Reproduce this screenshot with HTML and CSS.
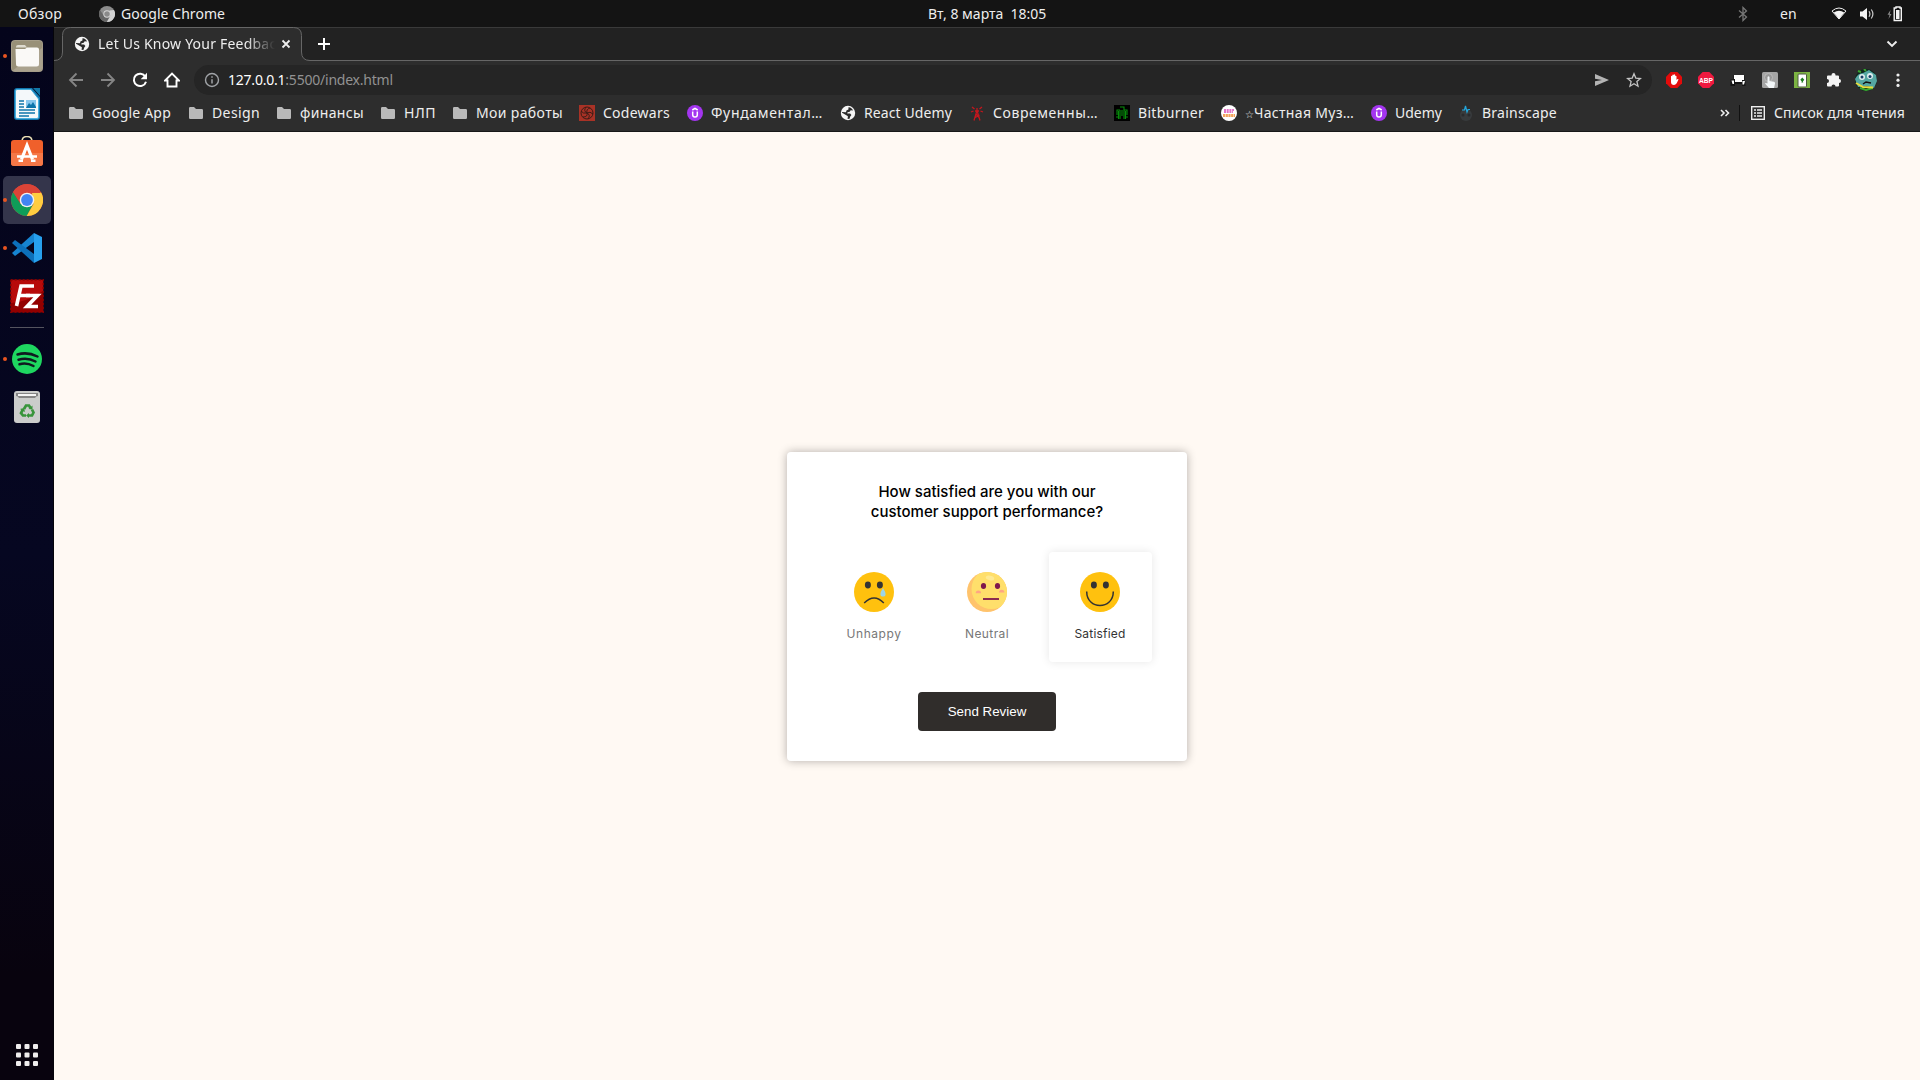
FILE: index.html
```html
<!DOCTYPE html>
<html lang="ru">
<head>
<meta charset="utf-8">
<title>Let Us Know Your Feedback</title>
<link rel="stylesheet" href="styles.css">
</head>
<body>
<svg class="defs" width="0" height="0">
  <symbol id="folder" viewBox="0 0 16 16"><path fill="#b9b9b9" d="M1 3.2Q1 2 2.2 2H6l2 2h5.8Q15 4 15 5.2v7.6q0 1.2-1.200 1.200H2.200Q1 14 1 12.800z"/></symbol>
  <symbol id="globe" viewBox="0 0 16 16"><circle cx="8" cy="8" r="7.200" fill="#f5f5f5"/><path fill="#2b2b2b" d="M8.500 2.200c1.800-.2 3.800 1.200 4.500 3.300l-2.300-.2-1 1.500-2.200.5-.2 1.200 2.800.1 1.300 1.500-1.300 1.700-.5 1.900-2 .2.300-2.700-2-1.200L2.500 8q-.6-.1-.5-.9L6 7.300l.4-1.700 2-1z"/></symbol>
  <symbol id="udemy" viewBox="0 0 16 16"><circle cx="8" cy="8" r="8" fill="#a435f0"/><path d="M5.300 5 8 3.300 10.700 5M5.700 6.500v3.300a2.300 2.300 0 0 0 4.600 0V6.500" fill="none" stroke="#fff" stroke-width="1.500"/></symbol>
  <symbol id="chrome" viewBox="0 0 32 32"><circle cx="16" cy="16" r="16" fill="#db4437"/><path fill="#0f9d58" d="M2.140 8A16 16 0 0 0 15.700 32L22.500 19.500 16 16 9.500 19.700z"/><path fill="#ffcd40" d="M29.900 8A16 16 0 0 1 15.700 32L22.500 20 21 9z"/><path fill="#db4437" d="M2.100 8A16 16 0 0 1 30 9H16L10 20z"/><circle cx="16" cy="16" r="7.300" fill="#f1f1f1"/><circle cx="16" cy="16" r="5.900" fill="#4285f4"/></symbol>
</svg>

<header class="topbar">
  <span class="overview">Обзор</span>
  <svg class="gray-chrome" viewBox="0 0 32 32"><circle cx="16" cy="16" r="16" fill="#8c8c8c"/><path fill="#666" d="M2.140 8A16 16 0 0 0 15.700 32L22.500 19.500 16 16 9.500 19.700z"/><path fill="#d2d2d2" d="M29.900 8A16 16 0 0 1 15.700 32L22.500 20 21 9z"/><circle cx="16" cy="16" r="7.300" fill="#d8d8d8"/><circle cx="16" cy="16" r="5.500" fill="#8a8a8a"/></svg>
  <span class="appname">Google Chrome</span>
  <span class="clock">Вт, 8 марта&nbsp; 18:05</span>
  <div class="tray">
    <svg class="bt" width="10" height="16" viewBox="0 0 10 16"><path d="M1 4.500 8.500 11 5 14.500v-13L8.500 5 1 11.500" fill="none" stroke="#777" stroke-width="1.300"/></svg>
    <span class="lang">en</span>
    <svg class="wifi" width="16" height="13" viewBox="0 0 16 13"><path d="M1 4Q8-2 15 4L8 12z" fill="none" stroke="#f0f0f0" stroke-width="1"/><path d="M2.800 5.500Q8 2 13.200 5.500L8 12z" fill="#f4f4f4"/></svg>
    <svg class="sound" width="16" height="14" viewBox="0 0 16 14"><path d="M1 4.500h2.500L8 1v12L3.500 9.500H1z" fill="#f4f4f4"/><path d="M10 4.200q1.800 2.800 0 5.600M12.300 2.500q3.200 4.500 0 9" fill="none" stroke="#ccc" stroke-width="1.200"/></svg>
    <svg class="battery" width="16" height="16" viewBox="0 0 16 16"><path d="M3.500 4 .5 8.700h2L1.500 13l3-5H2.800z" fill="#888"/><path d="M9 2V1h4v1h1.300v12.500H7.200V2z" fill="none" stroke="#f4f4f4" stroke-width="1.400"/><path d="M9 4h3.500v9H9z" fill="#f4f4f4"/></svg>
  </div>
</header>

<div class="desktop">
<nav class="dock">
  <div class="cell running"><svg width="32" height="32" viewBox="0 0 32 32"><rect width="32" height="32" rx="4" fill="#a59d89"/><rect x="1" y="1" width="30" height="30" rx="3" fill="#989078"/><path d="M1 31 31 8v20q0 3-3 3z" fill="#aaa28e"/><path d="M5 7q0-2 2-2h7l2 2.500H5z" fill="#dedbd0"/><path d="M4.500 9H14l2-1.500h10q2 0 2 2V24q0 2.500-2.500 2.500h-18Q5 26.500 5 24z" fill="#faf9f7"/></svg></div>
  <div class="cell"><svg width="26" height="32" viewBox="0 0 26 32"><path d="M3 0h15l8 9v20q0 3-3 3H3q-3 0-3-3V3q0-3 3-3z" fill="#1178b0"/><path d="M3 1.500h14L24.500 11v18q0 1.500-1.500 1.500H3Q1.500 30.500 1.500 29V3Q1.500 1.500 3 1.500z" fill="#f4f8fa" stroke="#4aaedb"/><path d="M19 0h7v8z" fill="#1178a8"/><path d="M5 13h5M5 16h5M5 19h5M5 22h16M5 25h16M5 28h10" stroke="#0e74aa" stroke-width="1.300"/><rect x="12" y="12" width="10" height="8" fill="#86c5ec"/><path d="m12 20 3-5 2 2 2-3 3 5v1z" fill="#0e74aa"/></svg></div>
  <div class="cell"><svg width="32" height="32" viewBox="0 2 32 32"><path d="M11 7.500q0-5 5-5t5 5" fill="none" stroke="#e9ddb4" stroke-width="1.500"/><rect y="6" width="32" height="26" rx="3" fill="#f0602b"/><path d="M0 19h32v10q0 3-3 3H3q-3 0-3-3z" fill="#f57747"/><path d="m10.500 25.500 5.500-14 5.500 14" fill="none" stroke="#fff" stroke-width="3.200"/><path d="M6 22.500h20M7.500 26.700h4.500m8 0h4.500" stroke="#fff" stroke-width="2.400"/></svg></div>
  <div class="cell running active"><svg width="32" height="32"><use href="#chrome"/></svg></div>
  <div class="cell running"><svg width="30" height="30" viewBox="0 0 30 30"><path d="M22 0 0 20l3 3L22 9z" fill="#1684d1"/><path d="M22 30 0 10l3-3L22 21z" fill="#0c70bb"/><path d="M22 0 30 4v22l-8 4z" fill="#27a0ee"/></svg></div>
  <div class="cell"><svg width="34" height="34" viewBox="0 0 34 34"><rect x=".7" y=".7" width="32.600" height="32.600" fill="#b70a0a" stroke="#820000" stroke-width="1.400" stroke-dasharray="2 2"/><path d="M1 24Q17 23 33 12v21H1z" fill="#930000"/><path d="M6.500 27 11 7h13M9 16.500h11" fill="none" stroke="#fff" stroke-width="3.600"/><path d="M16 16.500h11.500L17 27.500h11" fill="none" stroke="#fff" stroke-width="3.600"/></svg></div>
  <div class="rule"></div>
  <div class="cell running"><svg width="30" height="30" viewBox="0 0 30 30"><circle cx="15" cy="15" r="15" fill="#1ed760"/><path d="M5.500 10.500q10-3 20 2M6.500 15.700q9-2.600 17 1.800M7.500 20.300q7-2 14 1.700" fill="none" stroke="#101a20" stroke-width="2.500" stroke-linecap="round"/></svg></div>
  <div class="cell"><svg width="26" height="32" viewBox="0 0 26 32"><rect width="26" height="32" rx="3" fill="#cbcccb"/><path d="M2 2h22v3q-2 0-3 2H5Q4 5 2 5z" fill="#858585"/><path d="M4 3h18v2H4z" fill="#f4f4f4"/><g fill="none" stroke="#38943b" stroke-width="2.700"><path d="m10 18 2-3.500h3l1.500 2.500M18 18.500l1.500 3-1.500 3h-3.500M12 24.500H9L7 22l2-3.500"/></g><path d="m14.500 18 4 .5 0-4zM15 22v5l-3-2.500zM6 18l4-1 1 4z" fill="#38943b"/></svg></div>
  <svg class="apps" width="24" height="24" viewBox="0 0 24 24" fill="#efeded"><rect x="1" y="1" width="5" height="5" rx="1"/><rect x="9.500" y="1" width="5" height="5" rx="1"/><rect x="18" y="1" width="5" height="5" rx="1"/><rect x="1" y="9.500" width="5" height="5" rx="1"/><rect x="9.500" y="9.500" width="5" height="5" rx="1"/><rect x="18" y="9.500" width="5" height="5" rx="1"/><rect x="1" y="18" width="5" height="5" rx="1"/><rect x="9.500" y="18" width="5" height="5" rx="1"/><rect x="18" y="18" width="5" height="5" rx="1"/></svg>
</nav>

<div class="browser">
  <div class="tabs">
    <div class="tab">
      <svg class="outline" width="266" height="34" viewBox="0 0 266 34"><path d="M0 34v-.5Q8.500 33.500 8.500 25V8.500Q8.500.5 16.500.5h223q8 0 8 8V25q0 8.500 8.500 8.500v.5z" fill="#2d2d2d"/><path d="M0 33.500Q8.500 33.500 8.500 25V8.500Q8.500.5 16.500.5h223q8 0 8 8V25q0 8.500 8.500 8.500h10" fill="none" stroke="#666"/></svg>
      <svg class="tab-icon" width="16" height="16"><use href="#globe"/></svg>
      <span class="tab-title">Let Us Know Your Feedback</span>
      <svg class="close" width="10" height="10" viewBox="0 0 10 10"><path d="m1.500 1.500 7 7m0-7-7 7" stroke="#eee" stroke-width="1.800"/></svg>
    </div>
    <svg class="plus" width="14" height="14" viewBox="0 0 14 14"><path d="M7 1v12M1 7h12" stroke="#fff" stroke-width="2"/></svg>
    <svg class="chev" width="12" height="8" viewBox="0 0 12 8"><path d="m1.500 1.500 4.500 4.500 4.500-4.500" fill="none" stroke="#eee" stroke-width="1.900"/></svg>
  </div>
  <div class="toolbar">
    <div class="nav-buttons">
      <svg width="16" height="16" viewBox="0 0 16 16"><path d="M15 8H2m6.500-6.500L2 8l6.500 6.500" fill="none" stroke="#858585" stroke-width="1.800"/></svg>
      <svg width="16" height="16" viewBox="0 0 16 16"><path d="M1 8h13M7.500 1.500 14 8l-6.500 6.500" fill="none" stroke="#858585" stroke-width="1.800"/></svg>
      <svg width="16" height="16" viewBox="0 0 16 16"><path d="M13.300 4.500A6.200 6.200 0 1 0 14 9.700" fill="none" stroke="#fff" stroke-width="2"/><path d="M15 .8v6.400H8.700z" fill="#fff"/></svg>
      <svg width="16" height="16" viewBox="0 0 16 16"><path d="M1 8.500h2.500v6h9v-6H15L8 1.500z" fill="none" stroke="#fff" stroke-width="1.900"/></svg>
    </div>
    <div class="omnibox">
      <svg class="info" width="16" height="16" viewBox="0 0 16 16"><circle cx="8" cy="8" r="6.500" fill="none" stroke="#a0a3a7" stroke-width="1.400"/><path d="M8 7.200v4.300M8 4.300v1.500" stroke="#a0a3a7" stroke-width="1.500"/></svg>
      <span class="url"><b>127.0.0.1</b>:5500/index.html</span>
      <svg class="send" width="16" height="16" viewBox="0 0 16 16"><path d="M1 2 15 8 1 14V9.300L8 8 1 6.700z" fill="#b4b4b4"/></svg>
      <svg width="16" height="16" viewBox="0 0 16 16"><path d="m8 1.800 1.800 4.300 4.700.4-3.600 3.100L12 14.200 8 11.700l-4 2.500 1.100-4.600L1.500 6.500l4.700-.4z" fill="none" stroke="#c4c4c4" stroke-width="1.300"/></svg>
    </div>
    <div class="extensions">
      <svg width="16" height="16" viewBox="0 0 16 16"><path d="M4.700 0h6.600L16 4.700v6.600L11.300 16H4.700L0 11.300V4.700z" fill="#e30b0b"/><path d="M5 8.500V4.200q.7-.9 1.300 0V3q.8-1 1.500 0v-.3q.8-.8 1.400.2V4q.8-.7 1.300.2V8l1-1q1-.3 1 .5l-1.800 3.800Q9.500 13 8 13 5 13 5 10z" fill="#fff"/></svg>
      <svg width="16" height="16" viewBox="0 0 16 16"><path d="M4.700 0h6.600L16 4.700v6.600L11.300 16H4.700L0 11.300V4.700z" fill="#f0193f"/><text class="abp" x="8" y="10.700" text-anchor="middle" textLength="14" lengthAdjust="spacingAndGlyphs">ABP</text></svg>
      <svg width="16" height="16" viewBox="0 0 16 16"><path d="M.5 7.500h3v-4h11v6h1V14H12v-2H5v2H.5z" fill="#151515"/><path d="M4 3h10v5h-2v2H5V7H4z" fill="#fff"/><path d="M1.500 8.500H4V12H2.500zM12.500 9H15l-1 3.500h-1.500z" fill="#fff"/></svg>
      <svg width="16" height="16" viewBox="0 0 16 16"><rect width="16" height="16" rx="1.500" fill="#a5a5a5"/><circle cx="6.500" cy="5.500" r="4" fill="#999" stroke="#bcbcbc"/><path d="M5.500 5q1-1.300 2 0v4l4.500.7q1.400.4 1 2L12 16H7l-4-4.500q.5-1.200 2.500 0z" fill="#f2f6f8"/></svg>
      <svg width="16" height="16" viewBox="0 0 16 16"><path fill="#7cb342" d="M0 0h16v16H0z"/><rect x="4" y="2" width="8.500" height="13" rx="1" fill="#fff" stroke="#4c5a3e"/><path d="m8.300 5.500 2 2.300-1.500 1.700.5 1h-2l.5-1-1.500-1.700z" fill="#1c7b20"/></svg>
      <svg width="16" height="16" viewBox="0 0 16 16"><path fill="#f5f5f5" d="M1 4.500Q1 3.500 2 3.500h3.500V3a2 2 0 0 1 4 0v.5h2.500q1 0 1 1V7a2 2 0 0 1 0 4v2.500q0 1-1 1H9.500a2 2 0 0 0-4 0H2q-1 0-1-1V11a2 2 0 0 0 0-4z"/></svg>
      <svg class="avatar" width="22" height="22" viewBox="0 0 22 22"><circle cx="11" cy="11" r="11" fill="#10281e"/><path d="M0 10Q3 4 8 4l6-3 7 5 1 6-3 7-7-2-9 1z" fill="#55a7a2"/><path d="m3 2 3 1M9 0l2 2m-6 17 6 2 7-2" stroke="#39a72f" stroke-width="2"/><path d="m1 14 7 4 10 .5" stroke="#e5dc3e" stroke-width="2" fill="none"/><circle cx="7" cy="8" r="3" fill="#e1f0ef"/><circle cx="15" cy="7" r="3" fill="#e1f0ef"/><circle cx="7" cy="8" r="1.500" fill="#173d66"/><circle cx="15" cy="7.500" r="1.500" fill="#173d66"/><path d="m8 15 3-2 5 1" fill="none" stroke="#111" stroke-width="1.500"/></svg>
      <svg class="dots" width="4" height="16" viewBox="0 0 4 16" fill="#eee"><circle cx="2" cy="3" r="1.600"/><circle cx="2" cy="8.200" r="1.600"/><circle cx="2" cy="13.400" r="1.600"/></svg>
    </div>
  </div>
  <div class="bookmarks">
    <div class="bm b1"><svg><use href="#folder"/></svg><span>Google App</span></div>
    <div class="bm b2"><svg><use href="#folder"/></svg><span>Design</span></div>
    <div class="bm b3"><svg><use href="#folder"/></svg><span>финансы</span></div>
    <div class="bm b4"><svg><use href="#folder"/></svg><span>НЛП</span></div>
    <div class="bm b5"><svg><use href="#folder"/></svg><span>Мои работы</span></div>
    <div class="bm b6"><svg viewBox="0 0 16 16"><path fill="#a83226" d="M0 0h16v16H0z"/><g fill="none" stroke="#3c1c16" stroke-width="1"><circle cx="8" cy="8" r="6"/><path d="M8 8q-1-4 3-5M8 8q3-2 6 1M8 8q4 2 1 6M8 8q1 4-4 4M8 8q-4 1-6-2M8 8Q4 6 7 2"/></g></svg><span>Codewars</span></div>
    <div class="bm b7"><svg><use href="#udemy"/></svg><span>Фундаментал…</span></div>
    <div class="bm b8"><svg><use href="#globe"/></svg><span>React Udemy</span></div>
    <div class="bm b9"><svg viewBox="0 0 16 16"><path d="m5 15.500 3-10 3 10M5.500 13l5-3M7 9l3.500 4M6 6h4M3 2l2.500 2M2 7l2.500-1M13 2l-2.500 2M14 7l-2.500-1M8 3v4" fill="none" stroke="#c5161d" stroke-width="1.300"/></svg><span>Современны…</span></div>
    <div class="bm b10"><svg viewBox="0 0 16 16"><path d="M0 0h16v16H0z"/><path d="M6 2h4v3h3v5M6 5H3v5m3-5v9m4-9v9M8 5v6M4.500 6v8m7-8v8M2 12h2m8 0h2" fill="none" stroke="#078c0b" stroke-width="1.100"/></svg><span>Bitburner</span></div>
    <div class="bm b11"><svg viewBox="0 0 16 16"><circle cx="8" cy="8" r="8" fill="#fff"/><path d="M3 5h10M3 7h9" stroke="#d746b6" stroke-width="1.500" stroke-dasharray="2 .7"/><path d="M2 10.500h12" stroke="#f3a45b" stroke-width="2.800" stroke-dasharray="2.200 .5"/></svg><span><i class="star">☆</i>Частная Муз…</span></div>
    <div class="bm b12"><svg><use href="#udemy"/></svg><span>Udemy</span></div>
    <div class="bm b13"><svg viewBox="0 0 16 16"><circle cx="8" cy="10" r="6" fill="#383b3d"/><circle cx="5" cy="10" r="1.500" fill="#292b2d"/><circle cx="11" cy="10" r="1.500" fill="#292b2d"/><path d="M4 5h2.500l1-4 1.500 6 1-2.500h2" fill="none" stroke="#22a7de" stroke-width="1.200"/></svg><span>Brainscape</span></div>
    <svg class="more" width="10" height="10" viewBox="0 0 10 10"><path d="m1 2 3 3-3 3m4.500-6 3 3-3 3" fill="none" stroke="#eee" stroke-width="1.600"/></svg>
    <div class="reading"><svg width="16" height="16" viewBox="0 0 16 16"><rect x="1.700" y="1.700" width="12.600" height="12.600" fill="none" stroke="#eee" stroke-width="1.400"/><path d="M4 5h2m1 0h5M4 8h2m1 0h5M4 11h2m1 0h5" stroke="#eee" stroke-width="1.400"/></svg><span>Список для чтения</span></div>
  </div>
  <main class="page">
    <section class="card">
      <h1>How satisfied are you with our<br>customer support performance?</h1>
      <div class="ratings">
        <div class="rating"><svg width="40" height="40" viewBox="0 0 40 40"><circle cx="20" cy="20" r="20" fill="#ffc10e"/><ellipse cx="13.900" cy="13" rx="3" ry="3.400" fill="#333"/><ellipse cx="25.900" cy="13" rx="3" ry="3.400" fill="#333"/><path d="M10.200 31q10-10 19.600 0" fill="none" stroke="#333" stroke-width="1.500"/><path d="M29 16q-2.600 4-2.600 6a2.600 2.600 0 0 0 5.200 0q0-2-2.600-6z" fill="#9dd5e5"/></svg><small class="unhappy">Unhappy</small></div>
        <div class="rating"><svg width="40" height="40" viewBox="0 0 40 40"><clipPath id="face"><circle cx="20" cy="20" r="20"/></clipPath><circle cx="20" cy="20" r="20" fill="#ffc36c"/><circle cx="24.500" cy="17" r="20" fill="#ffdf6b" clip-path="url(#face)"/><ellipse cx="23" cy="6" rx="4.300" ry="2.300" transform="rotate(12 23 6)" fill="#ffe991"/><ellipse cx="16.500" cy="14" rx="2.600" ry="2.900" fill="#7f184c"/><ellipse cx="30.500" cy="14" rx="2.600" ry="2.900" fill="#7f184c"/><path d="M8.700 21.300a2.700 2.700 0 0 1 5.400 0M32 20.500a2.700 2.700 0 0 1 5.400 0" fill="#ffa684"/><path d="M16 27h16" stroke="#7f184c" stroke-width="1.800"/></svg><small class="neutral">Neutral</small></div>
        <div class="rating selected"><svg width="40" height="40" viewBox="0 0 40 40"><circle cx="20" cy="20" r="20" fill="#ffc10e"/><ellipse cx="13.900" cy="13" rx="3" ry="3.400" fill="#333"/><ellipse cx="25.900" cy="13" rx="3" ry="3.400" fill="#333"/><path d="M6.700 19.500c0 18.800 26.600 18.800 26.600 0" fill="none" stroke="#333" stroke-width="1.500"/></svg><small class="satisfied">Satisfied</small></div>
      </div>
      <button>Send Review</button>
    </section>
  </main>
</div>
</div>
</body>
</html>
```
FILE: styles.css
```css
* { box-sizing: border-box; }
body { margin: 0; width: 1920px; height: 1080px; overflow: hidden; background: #fff9f3; font: 14px/18px "Noto Sans", sans-serif; color: #eee; }
svg { display: block; flex: none; }
.defs { position: absolute; }
.topbar span, .bookmarks span, .tab-title, .url { white-space: nowrap; }

.topbar { height: 27px; background: #141414; display: grid; grid-template-columns: 99px 22px 779px 174px 1fr; align-items: center; }
.overview { padding-left: 18px; letter-spacing: .27px; }
.gray-chrome { width: 16px; height: 16px; }
.appname { letter-spacing: .05px; }
.clock { padding-left: 28px; }
.tray { display: flex; align-items: center; padding-left: 664px; }
.lang { margin-left: 32px; width: 17px; }
.wifi { margin-left: 34px; }
.sound { margin-left: 12px; }
.battery { margin-left: 12px; }

.desktop { display: flex; height: 1053px; }
.dock { width: 54px; padding: 5px 3px 0; background: linear-gradient(#04041b, #060721 50%, #08030e 90%); border-right: 1px solid #05050a; display: flex; flex-direction: column; }
.cell { width: 48px; height: 48px; flex: none; display: flex; align-items: center; justify-content: center; position: relative; border-radius: 5px; }
.cell.active { background: #34354b; }
.running::before { content: ""; position: absolute; left: 0; top: 22px; width: 4px; height: 4px; border-radius: 50%; background: #e95420; }
.rule { height: 1px; width: 34px; margin: 7px 7px; background: #54545f; }
.apps { margin: auto 12px 13px; }

.browser { flex: 1; display: flex; flex-direction: column; }
.tabs { height: 34px; background: #222; border-top: 1px solid #3a3a3a; border-bottom: 1px solid #666; display: flex; align-items: center; }
.tab { width: 248px; height: 34px; display: flex; align-items: center; position: relative; padding-left: 20px; }
.tab > * { position: relative; }
.tab .outline { position: absolute; left: 0; top: 0; }
.tab-title { margin-left: 8px; width: 177px; overflow: hidden; letter-spacing: .21px; -webkit-mask-image: linear-gradient(90deg, #000 148px, transparent 177px); mask-image: linear-gradient(90deg, #000 148px, transparent 177px); }
.close { margin-left: 6px; }
.plus { margin-left: 15px; }
.chev { margin-left: auto; margin-right: 22px; }

.toolbar { height: 38px; background: #2d2d2d; display: flex; align-items: center; }
.nav-buttons { display: flex; gap: 16px; width: 140px; padding-left: 14px; }
.omnibox { width: 1458px; height: 30px; border-radius: 15px; background: #252525; display: flex; align-items: center; padding: 0 10px; color: #929292; }
.url { margin-left: 8px; letter-spacing: -.22px; }
.url b { color: #fff; font-weight: 400; }
.send { margin-left: auto; margin-right: 16px; }
.extensions { display: flex; align-items: center; gap: 16px; padding-left: 14px; }
.extensions .avatar { margin: 0 -3px; }
.extensions .dots { margin-left: 6px; }
.abp { font: bold 7px "Liberation Sans", sans-serif; fill: #fff; }

.bookmarks { height: 33px; background: #2d2d2d; border-bottom: 1px solid #181818; display: flex; align-items: center; padding: 0 0 4px 14px; }
.bm { display: flex; align-items: center; gap: 8px; flex: none; }
.bm svg { width: 16px; height: 16px; }
.b1 { width: 120px; letter-spacing: .19px; }
.b2 { width: 88px; letter-spacing: .38px; }
.b3 { width: 104px; letter-spacing: .35px; }
.b4 { width: 72px; letter-spacing: .52px; }
.b5 { width: 127px; letter-spacing: .37px; }
.b6 { width: 108px; letter-spacing: .26px; }
.b7 { width: 153px; letter-spacing: .66px; }
.b8 { width: 129px; letter-spacing: .1px; }
.b9 { width: 145px; letter-spacing: .57px; }
.b10 { width: 107px; letter-spacing: .32px; }
.b11 { width: 150px; letter-spacing: .32px; }
.b12 { width: 87px; }
.b13 { letter-spacing: .25px; }
.star { font: bold 10px "DejaVu Sans", sans-serif; letter-spacing: 0; }
.more { margin-left: auto; margin-right: 9px; }
.reading { width: 181px; height: 16px; border-left: 1px solid #111; padding-left: 10px; display: flex; align-items: center; gap: 8px; letter-spacing: .13px; }

.page { flex: 1; background: #fff9f3; display: flex; align-items: center; justify-content: center; color: #000; }
.card { width: 400px; height: 309px; border-radius: 4px; background: #fff; box-shadow: 0 0 10px rgba(0, 0, 0, .3); padding: 30px 0; display: flex; flex-direction: column; align-items: center; }
h1 { margin: 0; font: 500 15px/20px Inter, sans-serif; text-align: center; white-space: nowrap; }
.ratings { display: flex; gap: 10px; margin-top: 30px; }
.rating { width: 103px; height: 110px; padding-top: 20px; border-radius: 4px; display: flex; flex-direction: column; align-items: center; color: #777; }
.rating.selected { color: #333; box-shadow: 0 0 10px rgba(0, 0, 0, .1); }
small { font: 12px/16px Inter, sans-serif; margin-top: 14px; }
.unhappy { letter-spacing: .56px; }
.neutral { letter-spacing: .4px; }
.satisfied { letter-spacing: .19px; }
button { margin-top: 30px; width: 138px; height: 39px; border: 0; border-radius: 4px; background: #302d2b; color: #fff; font: 13.333px "Liberation Sans", sans-serif; padding: 0; }
```
